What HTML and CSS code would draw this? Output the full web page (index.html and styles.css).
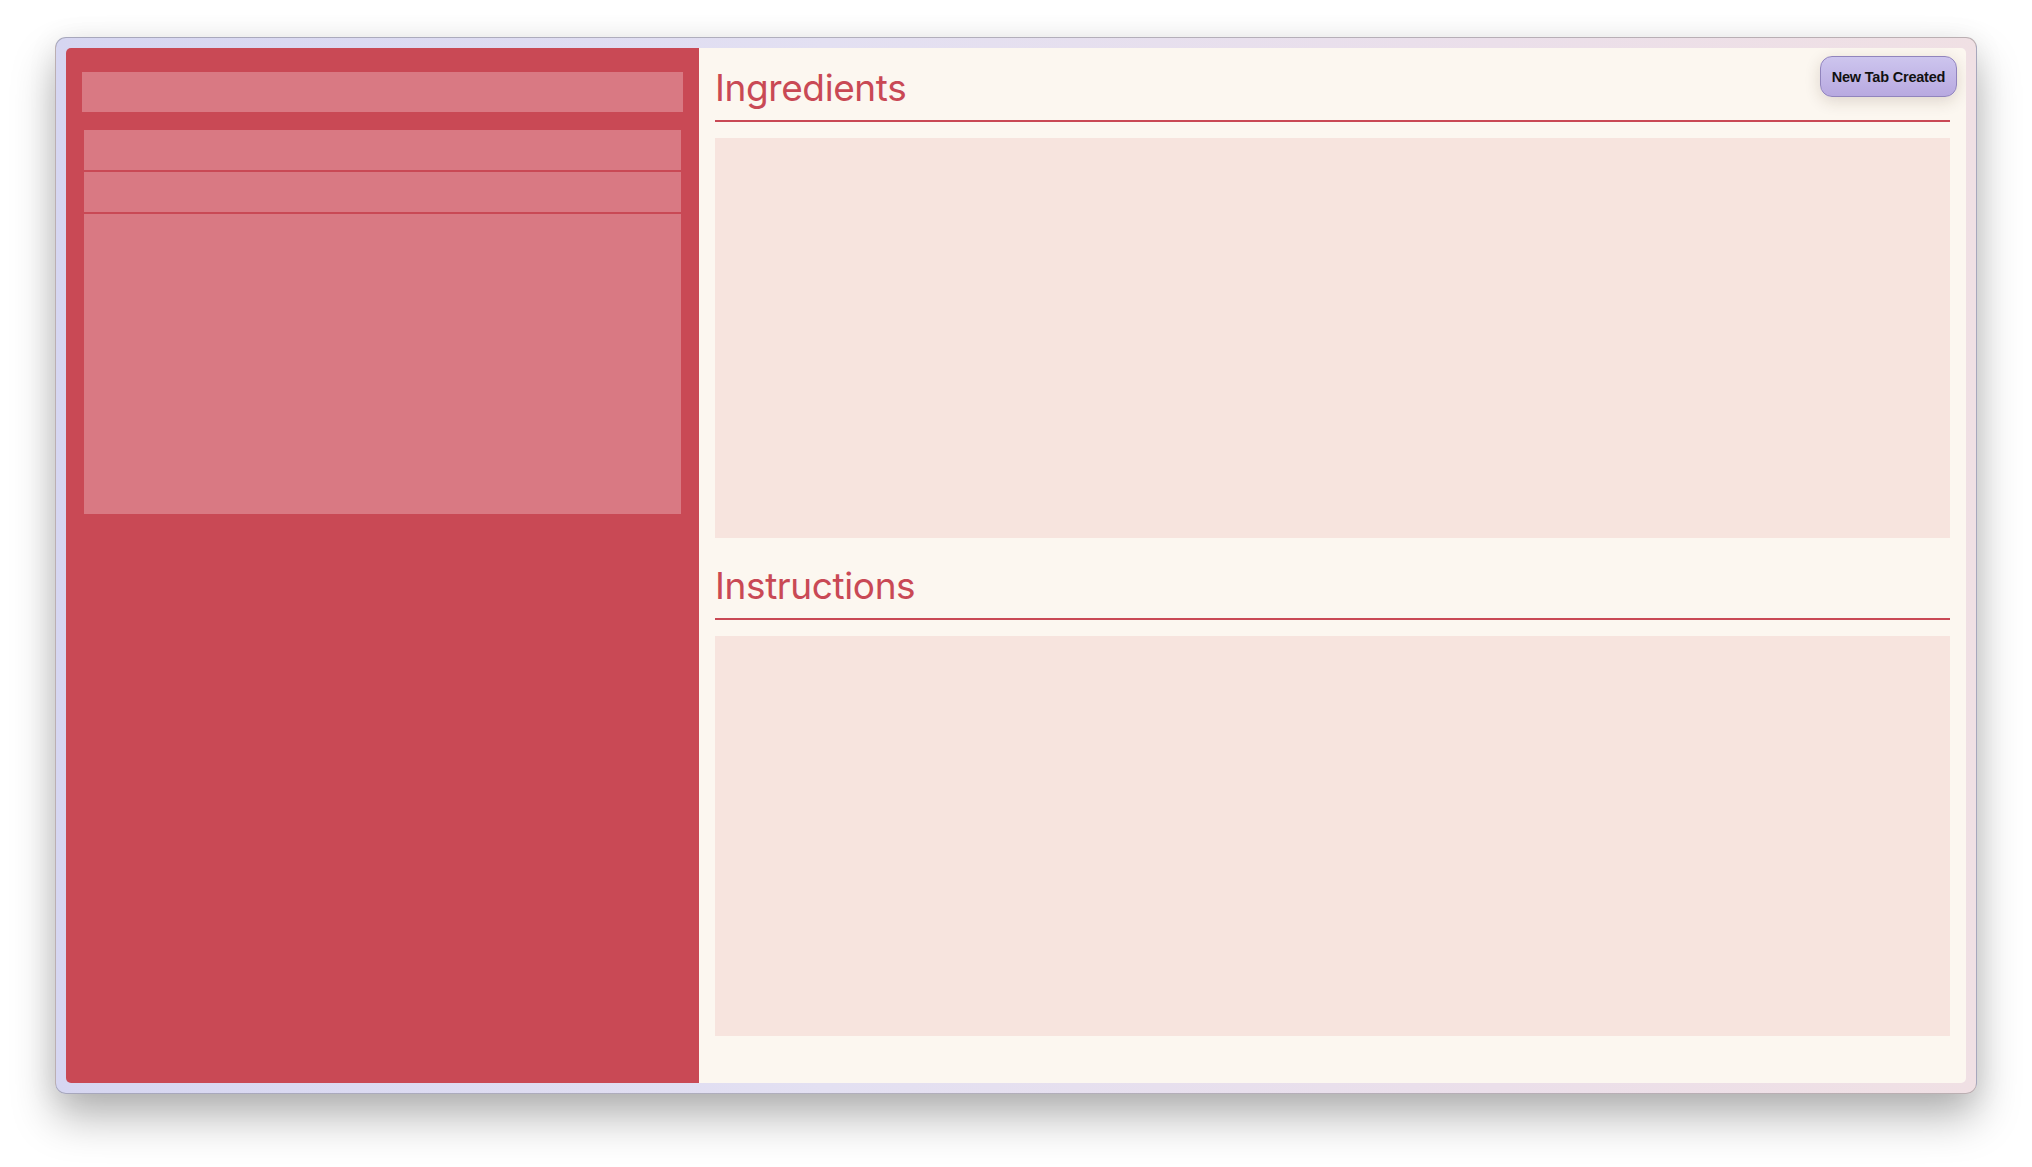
FILE: index.html
```html
<!DOCTYPE html>
<html lang="en">
<head>
<meta charset="utf-8">
<title>Recipe</title>
<link rel="stylesheet" href="styles.css">
</head>
<body>
  <div class="frame">
    <div class="window">
      <aside class="sidebar">
        <div class="search"></div>
        <div class="list">
          <div class="row"></div>
          <div class="row"></div>
          <div class="row big"></div>
        </div>
      </aside>
      <main class="main">
        <section class="section">
          <h2 class="heading">Ingredients</h2>
          <div class="panel"></div>
        </section>
        <section class="section">
          <h2 class="heading">Instructions</h2>
          <div class="panel"></div>
        </section>
        <div class="toast">New Tab Created</div>
      </main>
    </div>
  </div>
</body>
</html>
```
FILE: styles.css
```css
html, body {
  margin: 0;
  height: 100%;
}
body {
  box-sizing: border-box;
  height: 100vh;
  padding: 37px 55px 73px 55px;
  background: #ffffff;
  font-family: "Inter", "Liberation Sans", sans-serif;
}
.frame {
  box-sizing: border-box;
  height: 100%;
  padding: 10px;
  border: 1px solid rgba(0, 0, 0, 0.22);
  border-radius: 11px;
  background: linear-gradient(90deg, #d6d6f1 0%, #e3e0f2 40%, #ebdfea 75%, #f0e0e4 100%);
  box-shadow: 0 24px 44px rgba(0, 0, 0, 0.28), 0 4px 30px rgba(0, 0, 0, 0.08);
}
.window {
  display: flex;
  height: 100%;
  border-radius: 5px;
  overflow: hidden;
}
.sidebar {
  box-sizing: border-box;
  width: 633px;
  flex: none;
  background: #c94955;
  padding: 24px 16px;
}
.search {
  height: 40px;
  background: #d97983;
}
.list {
  margin: 18px 2px 0;
  display: flex;
  flex-direction: column;
  gap: 2px;
}
.row {
  height: 40px;
  background: #d97983;
}
.row.big {
  height: 300px;
}
.main {
  position: relative;
  flex: 1;
  background: #fcf7f0;
  padding: 0 16px;
  display: flex;
  flex-direction: column;
  gap: 8px;
}
.section {
  padding-top: 21px;
}
.heading {
  margin: 0;
  font-family: "Inter", sans-serif;
  font-weight: 400;
  font-size: 37px;
  line-height: 38px;
  letter-spacing: -0.4px;
  color: #c94955;
  padding-bottom: 13px;
  border-bottom: 2px solid #c94955;
}
.panel {
  margin-top: 16px;
  height: 400px;
  background: #f7e4de;
}
.toast {
  position: absolute;
  top: 8px;
  right: 9px;
  box-sizing: border-box;
  width: 137px;
  height: 41px;
  display: flex;
  align-items: center;
  justify-content: center;
  border: 1px solid #9184bd;
  border-radius: 12px;
  background: linear-gradient(180deg, #cdc5ee 0%, #b8a9e0 100%);
  box-shadow: 0 4px 16px rgba(60, 40, 20, 0.16);
  font-family: "Liberation Sans", Arial, sans-serif;
  font-weight: 700;
  font-size: 14.5px;
  letter-spacing: -0.2px;
  color: #111111;
}
```
